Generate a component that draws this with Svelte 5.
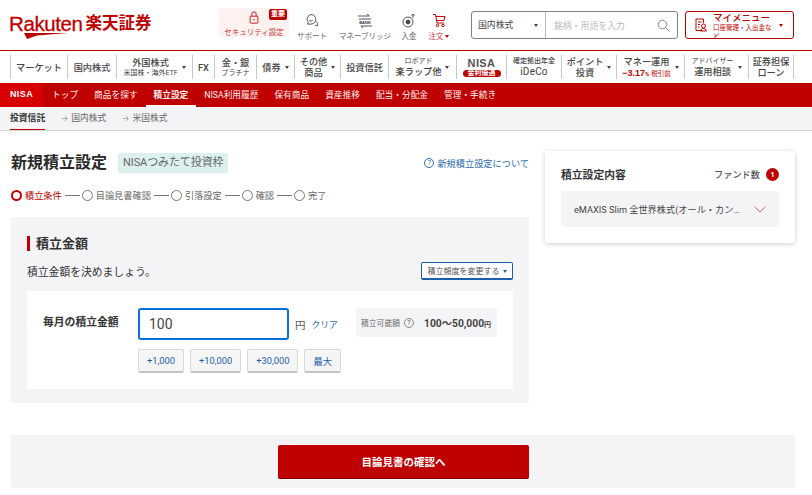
<script lang="ts">
  const tools = [
    { icon: 'bubble', label: 'サポート', w: 'support' },
    { icon: 'bank', label: 'マネーブリッジ', w: 'bridge' },
    { icon: 'coin', label: '入金', w: 'deposit' }
  ];
  const steps = ['目論見書確認', '引落設定', '確認', '完了'];
  const redNav = ['トップ', '商品を探す', '積立設定', 'NISA利用履歴', '保有商品', '資産推移', '配当・分配金', '管理・手続き'];
  const amounts = ['+1,000', '+10,000', '+30,000', '最大'];
</script>

<header class="top">
  <div class="logo">
    <div class="rakuten">Rakuten<svg class="swoosh" width="44" height="6" viewBox="0 0 44 6"><path d="M0 0H44L13 2.4 3 6Z" fill="#bf0000"/></svg></div>
    <span class="sec">楽天証券</span>
  </div>
  <div class="tools">
    <div class="tool security">
      <span class="alert">重要</span>
      <svg width="14" height="15" viewBox="0 0 14 15" fill="none" stroke="#bf0000" stroke-width="1"><rect x="2.5" y="6" width="9" height="8" rx="1"/><path d="M4.5 6V3.5a2.5 2.5 0 0 1 5 0V6"/><path d="M7 9v2"/></svg>
      <span class="lbl red">セキュリティ設定</span>
    </div>
    {#each tools as t}
      <div class="tool {t.w}">
        {#if t.icon === 'bubble'}
          <svg width="14" height="15" viewBox="0 0 14 15" fill="none" stroke="#444" stroke-width=".9"><path d="M6 1.5a4.8 4.8 0 0 1 0 9.6H2.4l1-1.6A4.8 4.8 0 0 1 6 1.5Z"/><path d="M4.5 5h.1M7.5 5h.1M4.300 7.400q1.700 1.200 3.400 0"/><path d="M11.500 8.500q2 1.700.6 4.500l-2-.6"/></svg>
        {:else if t.icon === 'bank'}
          <svg width="14" height="15" viewBox="0 0 14 15" fill="none" stroke="#444" stroke-width=".9"><path d="M0 3h11M9 1l2.500 2M14 13H3M5 15 3 13M1 6h12"/><text x="7" y="11" text-anchor="middle" font-size="4" font-family="Liberation Sans" font-weight="700" fill="#333" stroke="none">BANK</text></svg>
        {:else}
          <svg width="14" height="15" viewBox="0 0 14 15" fill="none" stroke="#444" stroke-width=".9"><circle cx="6" cy="9" r="5"/><circle cx="6" cy="9" r="2" fill="#444"/><path d="M11 1v4M9.500 2.500 11 1l1.500 1.500"/></svg>
        {/if}
        <span class="lbl">{t.label}</span>
      </div>
    {/each}
    <div class="tool order">
      <svg width="14" height="15" viewBox="0 0 14 15" fill="none" stroke="#bf0000" stroke-width="1"><path d="M1 1.500h2.500l1.500 8.500h7M4 3.500h9l-1 4H4.700"/><circle cx="5.500" cy="12.500" r="1.200"/><circle cx="11" cy="12.500" r="1.200"/></svg>
      <span class="lbl red">注文 <i class="caret"></i></span>
    </div>
  </div>
  <div class="search">
    <div class="market">国内株式<i class="caret dark"></i></div>
    <div class="term">
      <span>銘柄・用語を入力</span>
      <svg width="13" height="13" viewBox="0 0 13 13" fill="none" stroke="#888" stroke-width="1"><circle cx="5.500" cy="5.500" r="4.300"/><path d="m8.600 8.600 3.800 3.800"/></svg>
    </div>
  </div>
  <div class="mymenu">
    <svg width="13" height="14" viewBox="0 0 13 14" fill="none" stroke="#bf0000" stroke-width="1"><path d="M7 12.500H1V1h7.500v4M3 4h3.500M3 6.500h2M3 9h1.500"/><circle cx="8.500" cy="8" r="2"/><path d="M5.500 13q.5-2.500 3-2.500t3 2.500Z"/></svg>
    <div class="mm-text">
      <b>マイメニュー</b>
      <small>口座管理・入出金など</small>
    </div>
    <i class="caret"></i>
  </div>
</header>

<nav class="gnav">
  <div class="g">マーケット</div>
  <div class="g">国内株式</div>
  <div class="g arrow"><span class="stack"><span>外国株式</span><small>米国株・海外ETF</small></span><i class="caret dark"></i></div>
  <div class="g">FX</div>
  <div class="g"><span class="stack"><span>金・銀</span><small>プラチナ</small></span></div>
  <div class="g arrow">債券<i class="caret dark"></i></div>
  <div class="g arrow"><span class="stack tight"><span>その他</span><span>商品</span></span><i class="caret dark"></i></div>
  <div class="g">投資信託</div>
  <div class="g arrow"><span class="stack"><small>ロボアド</small><span>楽ラップ他</span></span><i class="caret dark"></i></div>
  <div class="g"><span class="stack"><span class="nisa">NISA</span><em class="nisa-pill">金利優遇</em></span></div>
  <div class="g"><span class="stack"><small class="bold">確定拠出年金</small><span class="ideco">iDeCo</span></span></div>
  <div class="g arrow"><span class="stack tight"><span>ポイント</span><span>投資</span></span><i class="caret dark"></i></div>
  <div class="g arrow"><span class="stack"><span>マネー運用</span><span class="rate"><b>−3.17</b><u>%</u> <small>税引前</small></span></span><i class="caret dark"></i></div>
  <div class="g arrow"><span class="stack"><small>アドバイザー</small><span>運用相談</span></span><i class="caret dark"></i></div>
  <div class="g last"><span class="stack tight"><span>証券担保</span><span>ローン</span></span></div>
</nav>

<nav class="rednav">
  <div class="nisa-tab">NISA</div>
  {#each redNav as item}
    <div class="r" class:on={item === '積立設定'}>{item}</div>
  {/each}
</nav>

<nav class="subnav">
  <div class="s on">投資信託</div>
  {#each ['国内株式', '米国株式'] as item}
    <div class="s">
      <svg class="chev" width="6" height="7" viewBox="0 0 6 7" fill="none" stroke="#aaa" stroke-width="1"><path d="M0 3.500h5M3 1l2.300 2.500L3 6"/></svg>{item}
    </div>
  {/each}
</nav>

<main class="page">
  <section class="left">
    <div class="title-row">
      <h1>新規積立設定</h1>
      <span class="tag">NISAつみたて投資枠</span>
      <a class="about"><span class="q">?</span>新規積立設定について</a>
    </div>
    <div class="steps">
      <span class="dot on"></span><span class="step on">積立条件</span>
      {#each steps as s}
        <span class="dash"></span><span class="dot"></span><span class="step">{s}</span>
      {/each}
    </div>
    <div class="panel">
      <h2>積立金額</h2>
      <div class="lead">
        <span>積立金額を決めましょう。</span>
        <button class="freq">積立頻度を変更する<i class="caret navy"></i></button>
      </div>
      <div class="card">
        <div class="amount-label">毎月の積立金額</div>
        <div class="amount-main">
          <div class="row">
            <div class="input">100</div>
            <span class="yen">円</span>
            <a class="clear">クリア</a>
          </div>
          <div class="quick">
            {#each amounts as a}
              <button>{a}</button>
            {/each}
          </div>
        </div>
        <div class="limit">
          <span class="limit-l">積立可能額</span><span class="q gray">?</span>
          <b>100〜50,000<small>円</small></b>
        </div>
      </div>
    </div>
  </section>

  <aside class="side">
    <div class="side-head">
      <h3>積立設定内容</h3>
      <span class="count">ファンド数</span>
      <span class="badge">1</span>
    </div>
    <div class="fund">
      <span class="fund-name">eMAXIS Slim 全世界株式(オール・カントリー)</span>
      <svg width="12" height="7" viewBox="0 0 12 7" fill="none" stroke="#bf0000" stroke-opacity=".6" stroke-width="1"><path d="m.7.7 5.300 5.300L11.300.7"/></svg>
    </div>
  </aside>
</main>

<div class="bottom">
  <button class="next">目論見書の確認へ</button>
</div>

<style>
  :global(body) {
    margin: 0;
    background: #fff;
    font-family: Roboto, "Noto Sans CJK JP", sans-serif;
    color: #333;
  }
  .caret {
    display: inline-block;
    width: 0;
    height: 0;
    border: 2.5px solid transparent;
    border-top: 3px solid #bf0000;
    border-bottom: 0;
    vertical-align: middle;
  }
  .caret.dark { border-top-color: #444; }
  .caret.navy { border-top-color: #1d5ea8; margin-left: 3px; }

  .top {
    height: 50px;
    border-bottom: 1px solid #bf0000;
    display: flex;
    align-items: center;
    padding-left: 9px;
    box-sizing: content-box;
  }
  .logo {
    width: 210px;
    display: flex;
    align-items: center;
    gap: 3px;
    color: #bf0000;
    flex-shrink: 0;
  }
  .rakuten {
    position: relative;
    font: 400 20.500px/22px "Liberation Sans", sans-serif;
    letter-spacing: -0.4px;
    -webkit-text-stroke: 0.3px #bf0000;
    margin-top: -2px;
  }
  .swoosh { position: absolute; left: 15px; top: 20px; }
  .sec { font-size: 16.500px; font-weight: 700; line-height: 22px; margin-top: -2px; }
  .tools { display: flex; width: 244px; flex-shrink: 0; }
  .tool {
    display: flex;
    flex-direction: column;
    align-items: center;
    gap: 4px;
    position: relative;
    padding-top: 4px;
    flex-shrink: 0;
    box-sizing: border-box;
    height: 33px;
  }
  .security { width: 70px; background: #fdf2ef; border-radius: 3px; margin-top: -1px; height: 29px; padding-top: 3px; }
  .support { width: 46px; }
  .bridge { width: 54px; margin-left: 3px; }
  .deposit { width: 28px; margin-left: 3px; }
  .order { width: 36px; margin-left: -2px; }
  .lbl { font-size: 7.500px; line-height: 9px; color: #666; white-space: nowrap; }
  .lbl.red { color: #c83c3c; }
  .alert {
    position: absolute;
    top: 1px;
    right: 2px;
    width: 18px;
    height: 11px;
    background: #bf0000;
    color: #fff;
    font-size: 7px;
    line-height: 11px;
    text-align: center;
    border-radius: 2px;
    font-weight: 700;
  }
  .search {
    margin-left: 8px;
    width: 207px;
    height: 28px;
    border: 1px solid #828282;
    border-radius: 3px;
    display: flex;
    box-sizing: border-box;
    flex-shrink: 0;
  }
  .market {
    width: 74px;
    border-right: 1px solid #bbb;
    font-size: 8.900px;
    line-height: 26px;
    padding-left: 6px;
    box-sizing: border-box;
    display: flex;
    align-items: center;
    justify-content: space-between;
    padding-right: 7px;
    color: #444;
  }
  .term {
    flex: 1;
    display: flex;
    align-items: center;
    justify-content: space-between;
    padding: 0 7px 0 8px;
    font-size: 8.900px;
    color: #bbb;
  }
  .mymenu {
    margin-left: 7px;
    width: 109px;
    height: 28px;
    border: 1px solid #bf0000;
    border-radius: 3px;
    box-sizing: border-box;
    display: flex;
    align-items: center;
    padding: 0 9px;
    flex-shrink: 0;
    gap: 5px;
    color: #bf0000;
  }
  .mymenu .caret { margin-left: 2px; }
  .mm-text { width: 59px; line-height: 1; overflow: hidden; height: 26px; flex-shrink: 0; }
  .mm-text b { display: block; font-size: 9.500px; line-height: 11px; font-weight: 500; margin-bottom: 1px; }
  .mm-text small { display: block; font-size: 6.500px; line-height: 9px; }

  .gnav {
    height: 32px;
    display: grid;
    grid-template-columns: 10px 57px 49px 76px 22px 42px 38px 46px 48px 68px 50px 55px 55px 68px 64px 46px;
    align-items: center;
  }
  .gnav::before { content: ''; }
  .g {
    height: 24px;
    border-left: 1px solid #c8c8c8;
    display: flex;
    align-items: center;
    justify-content: center;
    gap: 4px;
    font-size: 9.200px;
    font-weight: 500;
    color: #444;
    white-space: nowrap;
    box-sizing: border-box;
  }
  .g.last { border-right: 1px solid #c8c8c8; }
  .stack {
    display: flex;
    flex-direction: column;
    align-items: center;
    line-height: 12px;
  }
  .stack.tight { line-height: 11px; }
  .stack small { font-size: 7px; line-height: 9px; font-weight: 400; }
  .stack small.bold { font-weight: 500; }
  .ideco { font-size: 10px; letter-spacing: .2px; font-weight: 400; }
  .nisa { font: 700 11px/13px "Liberation Sans", sans-serif; letter-spacing: .4px; color: #555; }
  .nisa-pill {
    background: #bf0000;
    color: #fff;
    font-size: 7px;
    line-height: 7px;
    font-style: normal;
    border-radius: 4px;
    padding: 0 5px;
    font-weight: 700;
  }
  .rate { color: #bf0000; font-size: 8px; line-height: 11px; }
  .rate b { font: 700 9px/11px "Liberation Sans", sans-serif; }
  .rate u { text-decoration: none; font-size: 6px; font-weight: 700; }
  .rate small { font-size: 6.500px; }

  .rednav {
    height: 24px;
    background: #bf0000;
    display: flex;
    color: #fff;
    font-size: 8.700px;
    line-height: 24px;
    white-space: nowrap;
  }
  .nisa-tab {
    width: 43px;
    background: #d60000;
    text-align: center;
    font: 700 9px/22px "Liberation Sans", sans-serif;
    letter-spacing: .4px;
    margin-right: 9px;
  }
  .r { margin-right: 16px; box-sizing: border-box; height: 24px; opacity: .95; }
  .r.on {
    font-weight: 700;
    box-shadow: inset 0 -2px 0 #fff;
    padding: 0 8px;
    margin: 0 8px 0 -8px;
  }

  .subnav {
    height: 24px;
    background: #f4f4f6;
    border-bottom: 1px solid #d4d4d4;
    box-sizing: border-box;
    display: flex;
    padding-left: 10px;
    gap: 17px;
    font-size: 8.800px;
    line-height: 22px;
    color: #666;
  }
  .s.on {
    color: #333;
    font-weight: 700;
    height: 23px;
    box-shadow: inset 0 -1px 0 #bf0000;
  }
  .chev { margin-right: 3px; vertical-align: -0.5px; }

  .page {
    display: grid;
    grid-template-columns: 518px 250px;
    gap: 16px;
    padding: 0 11px;
    align-items: start;
  }
  .title-row {
    display: flex;
    align-items: center;
    margin-top: 21px;
    height: 22px;
  }
  h1 { font-size: 16px; font-weight: 700; margin: 0; line-height: 22px; color: #2a2a2a; }
  .tag {
    margin-left: 11px;
    background: #dcf1ee;
    border-radius: 2px;
    font-size: 11px;
    line-height: 20px;
    padding: 0 5px;
    color: #666;
    letter-spacing: -.1px;
  }
  .about {
    margin-left: auto;
    font-size: 9.200px;
    color: #2b6cb0;
    display: flex;
    align-items: center;
    gap: 2px;
  }
  .q {
    display: inline-block;
    width: 10px;
    height: 10px;
    box-sizing: border-box;
    border: 1px solid #2b6cb0;
    border-radius: 50%;
    font-size: 7px;
    line-height: 8px;
    text-align: center;
    margin-right: 1px;
  }
  .q.gray { border-color: #888; color: #666; margin: 0 10px 0 4px; }
  .steps {
    display: flex;
    align-items: center;
    margin-top: 15px;
    height: 12px;
    font-size: 9.200px;
    color: #666;
  }
  .dot {
    width: 11px;
    height: 11px;
    box-sizing: border-box;
    border: 1px solid #777;
    border-radius: 50%;
    margin-right: 3px;
  }
  .dot.on { border: 2.400px solid #bf0000; }
  .step { white-space: nowrap; }
  .step.on { color: #bf0000; }
  .dash { width: 15px; height: 1px; background: #777; margin: 0 2px 0 3px; }

  .panel {
    background: #f4f4f7;
    border-radius: 2px;
    margin-top: 16px;
    padding: 19px 16px 13px;
    height: 186px;
    box-sizing: border-box;
  }
  h2 {
    font-size: 13px;
    font-weight: 700;
    margin: 0;
    line-height: 15px;
    border-left: 3px solid #bf0000;
    padding-left: 6px;
    color: #333;
  }
  .lead {
    display: flex;
    justify-content: space-between;
    align-items: center;
    margin-top: 11px;
    height: 18px;
    font-size: 10.800px;
  }
  button { font-family: inherit; margin: 0; }
  .freq {
    width: 92px;
    height: 18px;
    background: #fff;
    border: 1px solid #1d5ea8;
    border-bottom-width: 2px;
    border-radius: 2px;
    font-size: 8px;
    color: #555;
    padding: 0;
    box-sizing: border-box;
    white-space: nowrap;
  }
  .card {
    background: #fff;
    border-radius: 2px;
    margin-top: 11px;
    height: 98px;
    display: flex;
    padding: 17px 16px 0;
    box-sizing: border-box;
  }
  .amount-label {
    width: 95px;
    font-size: 10.800px;
    font-weight: 700;
    line-height: 30px;
    flex-shrink: 0;
    white-space: nowrap;
  }
  .amount-main { width: 218px; flex-shrink: 0; }
  .row { display: flex; align-items: center; }
  .input {
    width: 151px;
    height: 32px;
    border: 2px solid #0a6fdc;
    border-radius: 3px;
    box-sizing: border-box;
    font-size: 14px;
    line-height: 28px;
    padding-left: 9px;
    color: #444;
  }
  .yen { font-size: 10.500px; margin-left: 6px; color: #555; }
  .clear { font-size: 8.800px; color: #2b6cb0; margin-left: 6px; }
  .quick { display: flex; gap: 6px; margin-top: 9px; }
  .quick button {
    height: 24px;
    padding: 0 8px;
    background: #f5f5f5;
    border: 1px solid #d8d8d8;
    border-bottom: 2px solid #c4c4c4;
    border-radius: 2px;
    font-size: 9.300px;
    color: #1d5ea8;
    box-sizing: border-box;
  }
  .limit {
    width: 141px;
    height: 29px;
    background: #f4f4f6;
    border-radius: 2px;
    box-sizing: border-box;
    padding: 0 5px;
    display: flex;
    align-items: center;
    white-space: nowrap;
    flex-shrink: 0;
  }
  .limit-l { font-size: 7.800px; color: #666; }
  .limit b { font-size: 10.300px; font-weight: 700; color: #444; }
  .limit small { font-size: 7px; }

  .side {
    margin-top: 20px;
    height: 92px;
    background: #fff;
    border-radius: 3px;
    box-shadow: 0 1px 5px rgba(0, 0, 0, .2);
    padding: 14px 16px 0;
    box-sizing: border-box;
  }
  .side-head { display: flex; align-items: center; height: 18px; }
  h3 { font-size: 10.800px; font-weight: 700; margin: 0; color: #333; }
  .count { margin-left: auto; font-size: 9.200px; color: #555; margin-right: 6px; font-weight: 500; }
  .badge {
    width: 13px;
    height: 13px;
    border-radius: 50%;
    background: #bf0000;
    color: #fff;
    font-size: 8px;
    line-height: 13px;
    text-align: center;
    font-weight: 700;
  }
  .fund {
    margin-top: 8px;
    height: 36px;
    background: #f4f4f7;
    border-radius: 2px;
    display: flex;
    align-items: center;
    padding: 0 13px;
    gap: 10px;
  }
  .fund-name {
    flex: 1;
    min-width: 0;
    overflow: hidden;
    text-overflow: ellipsis;
    white-space: nowrap;
    font-size: 9.200px;
    color: #444;
  }

  .bottom {
    margin: 32px 17px 0 11px;
    height: 53px;
    background: #f4f4f6;
    border-radius: 2px;
    padding-top: 10px;
    box-sizing: border-box;
    padding-left: 267px;
  }
  .next {
    display: block;
    width: 251px;
    height: 34px;
    background: #bf0000;
    border: 0;
    border-bottom: 1px solid #7d0000;
    border-radius: 2px;
    color: #fff;
    font-size: 10.500px;
    font-weight: 700;
  }
</style>
